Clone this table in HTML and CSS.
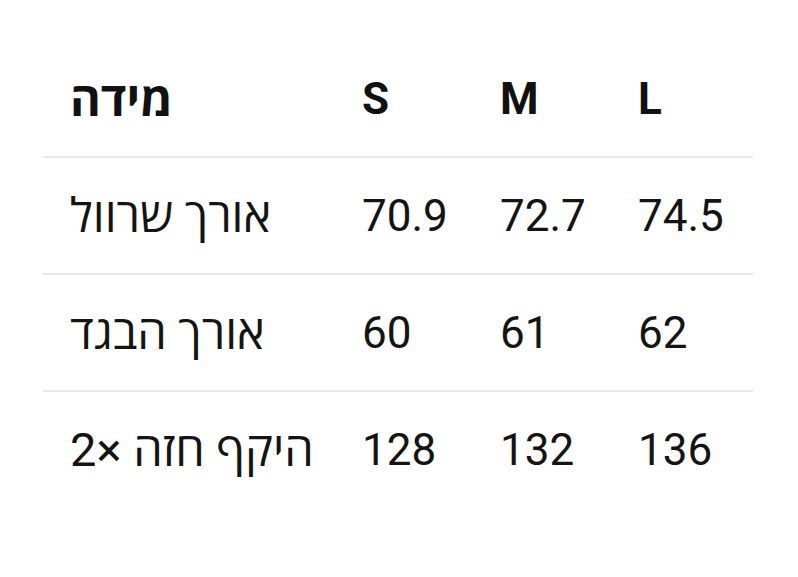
FILE: index.html
```html
<!DOCTYPE html>
<html lang="he">
<head>
<meta charset="utf-8">
<link rel="stylesheet" href="styles.css">
</head>
<body>
<table class="size-table">
  <colgroup>
    <col class="c-label"><col class="c-size"><col class="c-size"><col class="c-last">
  </colgroup>
  <thead>
    <tr class="row head">
      <th class="label"><span dir="rtl">מידה</span></th>
      <th>S</th><th>M</th><th>L</th>
    </tr>
  </thead>
  <tbody>
    <tr class="row">
      <td class="label"><span dir="rtl">אורך שרוול</span></td>
      <td>70.9</td><td>72.7</td><td>74.5</td>
    </tr>
    <tr class="row">
      <td class="label"><span dir="rtl">אורך הבגד</span></td>
      <td>60</td><td>61</td><td>62</td>
    </tr>
    <tr class="row last">
      <td class="label"><span dir="rtl">היקף חזה ×2</span></td>
      <td>128</td><td>132</td><td>136</td>
    </tr>
  </tbody>
</table>
</body>
</html>
```
FILE: styles.css
```css
html, body {
  margin: 0;
  padding: 0;
  background: #ffffff;
}
body {
  font-family: Roboto, "Open Sans", "Noto Sans", sans-serif;
  color: #141414;
}
.size-table {
  margin: 42px 0 0 43px;
  width: 710px;
  border-collapse: collapse;
  table-layout: fixed;
}
.c-label { width: 292px; }
.c-size { width: 138px; }
.c-last { width: 142px; }
.size-table th,
.size-table td {
  text-align: left;
  padding: 0 0 0 27px;
  height: 115px;
  vertical-align: middle;
  font-size: 44px;
  line-height: 1;
  white-space: nowrap;
}
.size-table th {
  font-weight: 700;
  color: #111111;
}
.size-table td {
  font-weight: 400;
}
.row {
  border-bottom: 2px solid #e8e8e8;
}
.row.head th {
  height: 114px;
}
.row.last {
  border-bottom: none;
}
.label span {
  display: inline-block;
  font-size: 47px;
  line-height: 1;
}
```
